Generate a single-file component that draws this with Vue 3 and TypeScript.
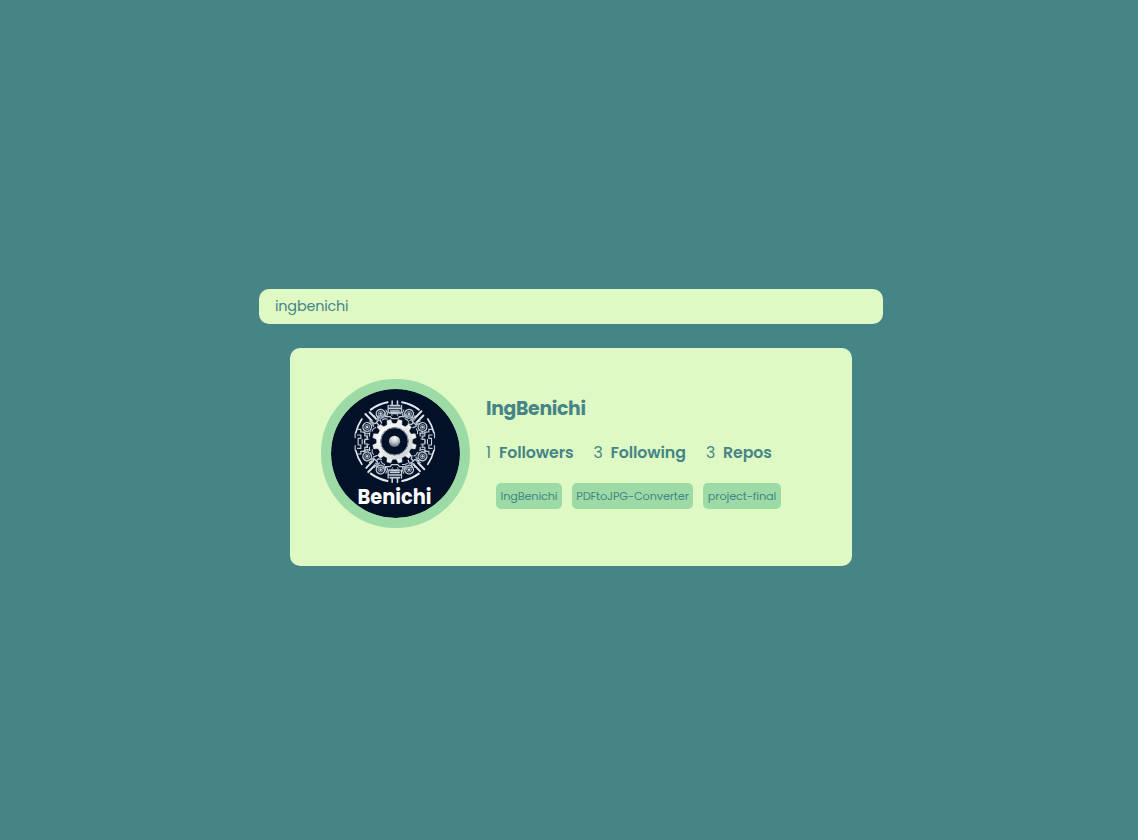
<script setup lang="ts">
import { ref } from 'vue'

interface Stat { count: number; label: string; key: string }

const query = ref('ingbenichi')
const stats: Stat[] = [
  { count: 1, label: 'Followers', key: 'followers' },
  { count: 3, label: 'Following', key: 'following' },
  { count: 3, label: 'Repos', key: 'repositories' },
]
const repos = [
  { name: 'IngBenichi', key: 'own' },
  { name: 'PDFtoJPG-Converter', key: 'pdf' },
  { name: 'project-final', key: 'final' },
]
const teeth = Array.from({ length: 12 }, (_, i) => 15 + i * 30)
const discs = [27, 62, 118, 153, 207, 242, 298, 333]
const sides = [90, 270]
const rods = [44, 136, 224, 316]
</script>

<template>
  <main class="page">
    <form class="search" @submit.prevent>
      <input v-model="query" class="field" type="text" aria-label="Search user" spellcheck="false" />
    </form>
    <section class="card">
      <div class="avatar">
        <svg viewBox="49.5 50 387 387" role="img" aria-label="Benichi">
          <defs>
            <radialGradient id="ball" cx=".5" cy=".25" r=".8">
              <stop offset="0" stop-color="#fff" />
              <stop offset=".45" stop-color="#c3c8cf" />
              <stop offset="1" stop-color="#525c6c" />
            </radialGradient>
            <linearGradient id="steel" x1="0" y1="0" x2="1" y2="1">
              <stop offset="0" stop-color="#fff" />
              <stop offset="1" stop-color="#cfd2d5" />
            </linearGradient>
          </defs>
          <rect x="40" y="40" width="410" height="410" fill="#021127" />
          <g transform="translate(241 208)" fill="none" stroke="#c5ced7" stroke-linecap="round">
            <g v-for="a in [0, 180]" :key="'arc' + a" :transform="`rotate(${a})`">
              <path d="M22-118A120 120 0 0 1 72-96" stroke="#e5eaee" stroke-width="6" />
              <path d="M-72-96A120 120 0 0 1-22-118" stroke="#e5eaee" stroke-width="6" />
              <path d="M99-68A120 120 0 0 1 117-27M-99-68A120 120 0 0 0-117-27" stroke="#e5eaee" stroke-width="5" />
            </g>
            <g v-for="a in [0, 180]" :key="'cap' + a" :transform="`rotate(${a})`">
              <path d="M-8-122v10M8-122v10M-14-108H14M-18-100H18M-13-92H13M-12-85H12" stroke-width="5" />
              <path d="M-20-109v22h40v-22M-28-85v10h14l5 6H9l5-6h14v-10M-48-77h13l7-8M48-77h-13l-7-8" stroke-width="4" />
            </g>
            <g v-for="a in sides" :key="'side' + a" :transform="`rotate(${a})`" stroke-width="3.5">
              <path d="M-26-119h14M12-119h14M-20-112v10h10v-8h20v8h10v-10M-37-110v8h8v12h12v8h10v-8h14v8h10v-8h12v-12h8v-8M-26-76h9M17-76h9M-6-98h12M-4-91h8" />
            </g>
            <g v-for="a in discs" :key="'disc' + a" :transform="`rotate(${a}) translate(0 -94)`" stroke-width="4">
              <circle r="13" />
              <circle r="7" stroke="#8e9cac" stroke-width="3" />
              <circle r="2" fill="#e1e6ea" />
              <path d="M-19-3v12l7 7M19-3v12l-7 7M-4 19H4l7 4" stroke-width="3" />
            </g>
            <g v-for="a in rods" :key="'rod' + a" :transform="`rotate(${a})`">
              <path d="M-6-121V-94M7-116V-86" stroke="#dce2e7" stroke-width="6" />
              <path d="M-13-91l8 11H8l8-10M0-79v8l-8 5M14-77l-4 9" stroke-width="4" />
            </g>
            <g v-for="a in teeth" :key="'trace' + a" :transform="`rotate(${a})`" stroke="#97a5b3" stroke-width="3">
              <path d="M-13-77v-8h8v-8M12-77v-6l-6-5" />
            </g>
          </g>
          <g transform="translate(240 207)">
            <circle r="61" fill="#021127" />
            <path v-for="a in teeth" :key="a" :transform="`rotate(${a})`" d="M-9-50L-6-66H6L9-50Z" fill="#eceeee" stroke="#eceeee" stroke-linejoin="round" />
            <circle r="48" fill="none" stroke="url(#steel)" stroke-width="13" />
            <circle r="41" fill="#021127" stroke="#8995a1" stroke-width="3" />
            <circle r="17" fill="url(#ball)" />
          </g>
          <text class="logo" x="129" y="396" textLength="222" lengthAdjust="spacingAndGlyphs">Benichi</text>
        </svg>
      </div>
      <div class="info">
        <h2>IngBenichi</h2>
        <ul class="stats">
          <li v-for="stat in stats" :key="stat.key" :class="stat.key">
            <span class="count">{{ stat.count }}</span><strong>{{ stat.label }}</strong>
          </li>
        </ul>
        <div class="repos">
          <a v-for="repo in repos" :key="repo.key" :class="['repo', repo.key]"><span>{{ repo.name }}</span></a>
        </div>
      </div>
    </section>
  </main>
</template>

<style>
body { background: #468585; }
</style>

<style scoped>
* { box-sizing: border-box; }
.page {
  height: 840px;
  padding: 288.5px 0 0 4px;
  display: flex;
  flex-direction: column;
  align-items: center;
  background: #468585;
  color: #468585;
  font-family: Poppins, Inter, sans-serif;
  overflow: hidden;
}
.search { width: 624px; height: 36px; }
.field {
  display: block;
  width: 100%;
  height: 35.5px;
  padding: 0 16px;
  border: 0;
  border-radius: 10px;
  outline: 0;
  background: #def9c4;
  color: #468585;
  font: inherit;
  font-size: 14.4px;
  letter-spacing: -.2px;
}
.card {
  width: 562px;
  height: 218px;
  margin-top: 23.3px;
  padding: 31px 31px 31px 31.4px;
  display: flex;
  border-radius: 10px;
  background: #def9c4;
}
.avatar {
  width: 149px;
  height: 149px;
  flex: none;
  border: 10px solid #9cdba6;
  border-radius: 50%;
  overflow: hidden;
  background: #9cdba6;
}
.avatar svg { display: block; width: 129px; height: 129px; border-radius: 50%; }
.logo { fill: #fafafa; font: 700 62px Poppins, Lato, sans-serif; }
.info { padding: 14px 0 0 15.6px; }
h2 { margin: 0; height: 32px; font-size: 18.8px; line-height: 32px; font-weight: 700; letter-spacing: -.3px; }
.stats { margin: 14px 0 0; padding: 0; height: 28px; display: flex; list-style: none; line-height: 28px; }
.stats li { display: flex; white-space: nowrap; font-size: 15.8px; letter-spacing: -.1px; }
.count { width: 13px; }
.following .count, .repositories .count { width: 17px; }
.followers { width: 107.5px; }
.following { width: 112.5px; }
.stats strong { font-weight: 600; }
.repos { margin: 16.7px 0 0 10px; gap: 10px; display: flex; }
.repo {
  height: 26px;
  display: flex;
  align-items: center;
  justify-content: center;
  border-radius: 5px;
  background: #9cdba6;
  font-size: 11.3px;
  letter-spacing: -.15px;
  white-space: nowrap;
}
.own { width: 66px; }
.pdf { width: 121px; }
.final { width: 78px; }
</style>
